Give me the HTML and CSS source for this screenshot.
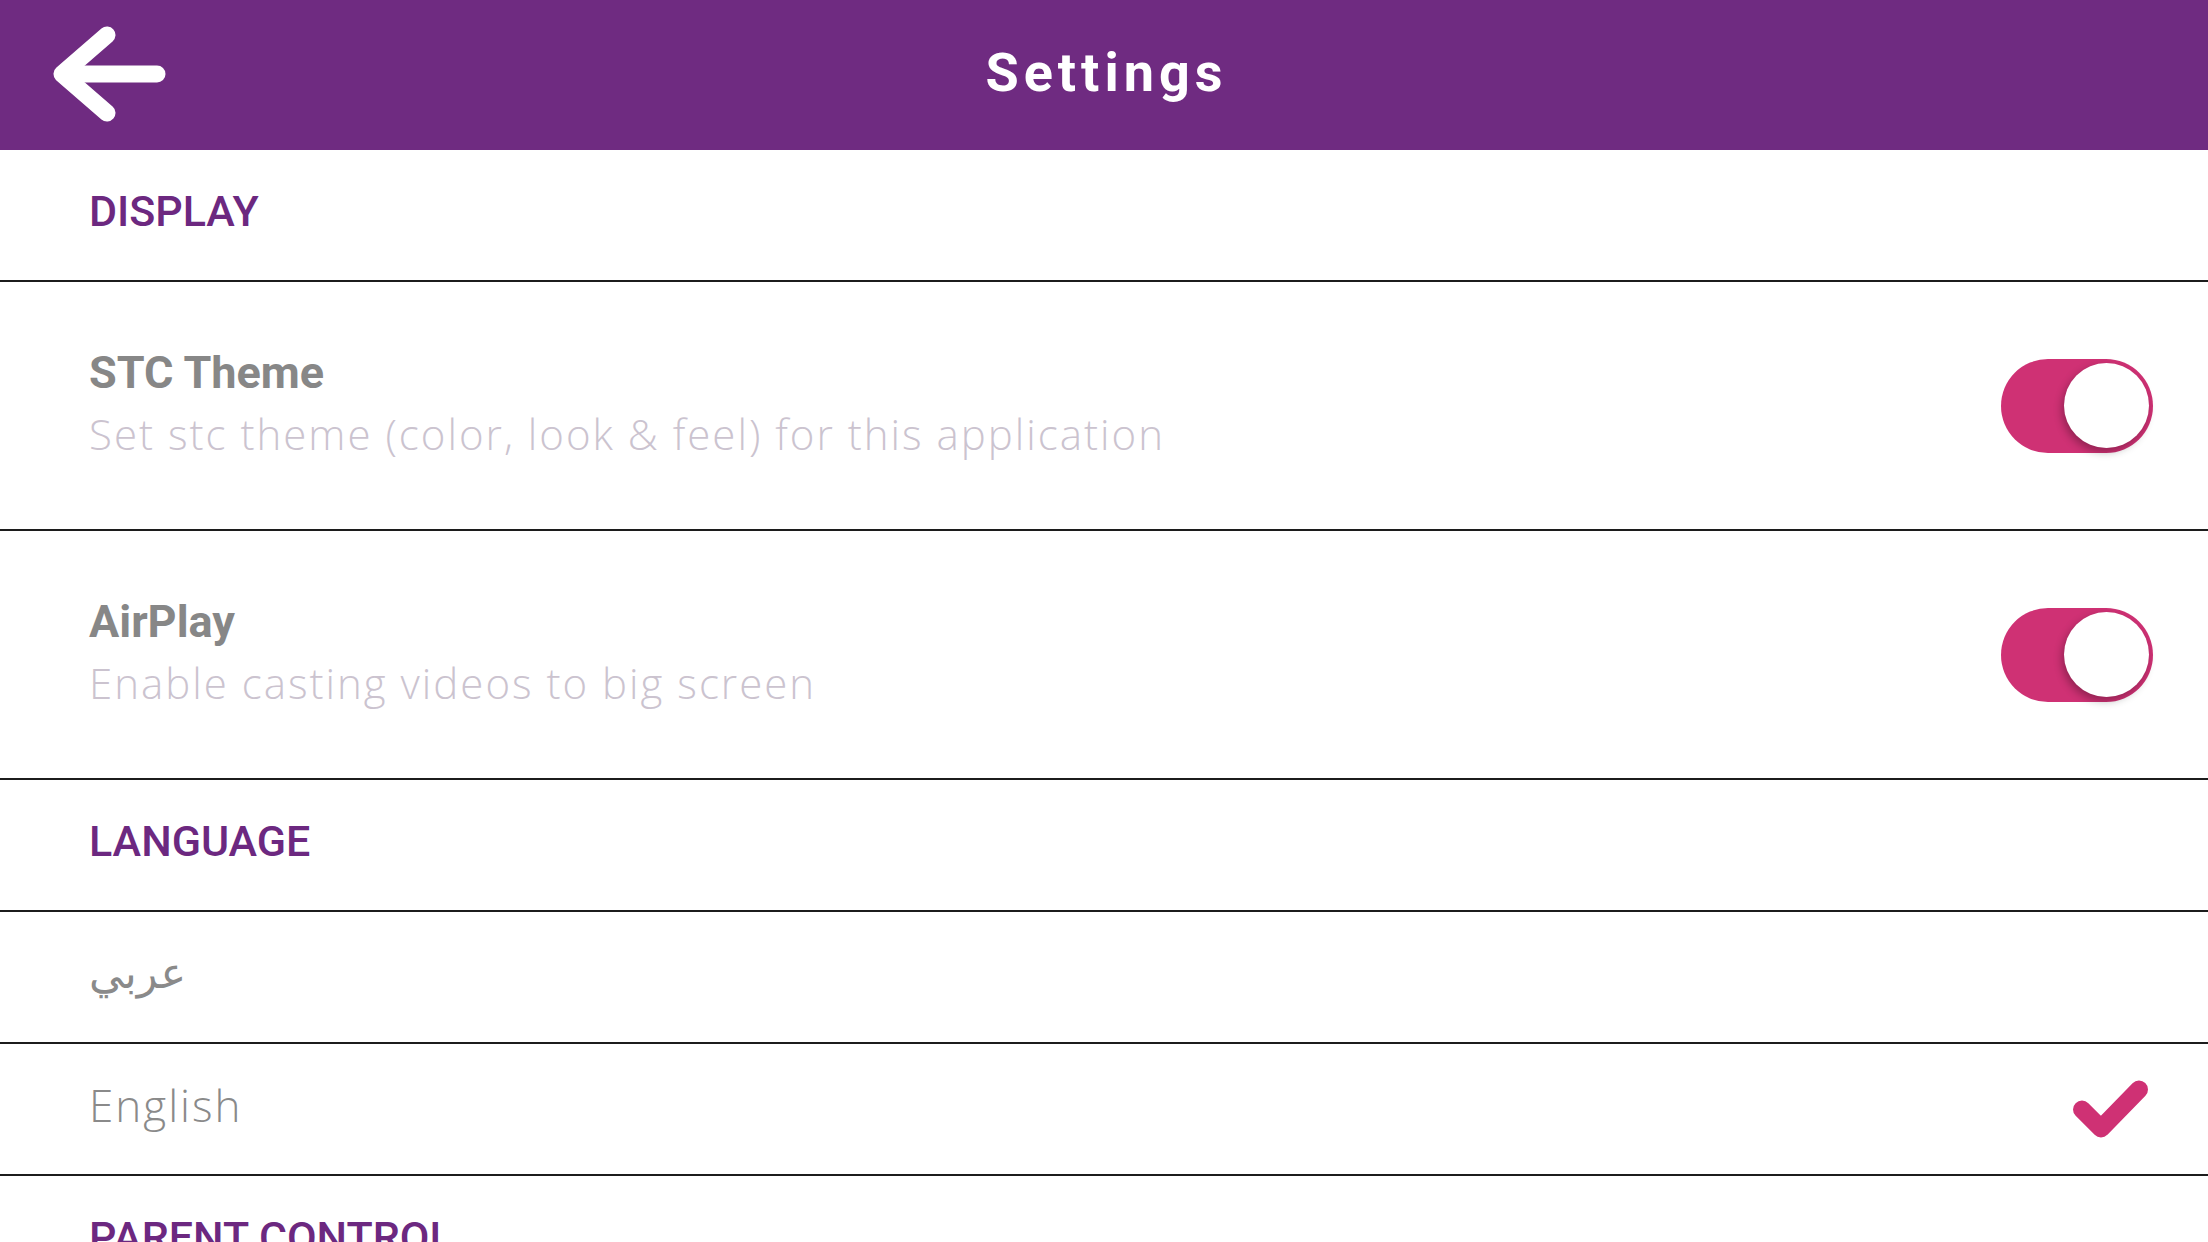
FILE: index.html
```html
<!DOCTYPE html>
<html lang="en">
<head>
    <meta charset="UTF-8">
    <meta name="viewport" content="width=device-width, initial-scale=1.0">
    <title>Settings</title>
    <link rel="stylesheet" href="styles.css">
</head>
<body>
    <header class="topbar">
        <div class="back">
            <svg width="120" height="100" viewBox="0 0 120 100">
                <polyline points="57,10 12,49 57,88" fill="none" stroke="#fff" stroke-width="17" stroke-linecap="round" stroke-linejoin="round"/>
                <line x1="14" y1="49" x2="107" y2="49" stroke="#fff" stroke-width="17" stroke-linecap="round"/>
            </svg>
        </div>
        <h1>Settings</h1>
        <div class="spacer"></div>
    </header>

    <div class="list">
        <div class="section">DISPLAY</div>

        <div class="item">
            <div class="texts">
                <div class="title">STC Theme</div>
                <div class="sub">Set stc theme (color, look &amp; feel) for this application</div>
            </div>
            <div class="toggle on"><span class="knob"></span></div>
        </div>

        <div class="item">
            <div class="texts">
                <div class="title">AirPlay</div>
                <div class="sub">Enable casting videos to big screen</div>
            </div>
            <div class="toggle on"><span class="knob"></span></div>
        </div>

        <div class="section">LANGUAGE</div>

        <div class="lang">
            <span lang="ar">عربي</span>
        </div>
        <div class="lang">
            <span>English</span>
            <svg class="check" width="80" height="60" viewBox="0 0 80 60">
                <polyline points="9,30.5 28,49.5 66,10.5" fill="none" stroke="#cf3174" stroke-width="18" stroke-linecap="round" stroke-linejoin="round"/>
            </svg>
        </div>

        <div class="section">PARENT CONTROL</div>
    </div>
</body>
</html>
```

FILE: styles.css
```css
html, body {
    margin: 0;
    padding: 0;
}
body {
    font-family: 'Roboto', 'Noto Sans', sans-serif;
    background-color: #ffffff;
    height: 1242px;
    overflow: hidden;
}
.topbar {
    height: 150px;
    background-color: #6f2b81;
    display: flex;
    align-items: center;
}
.back, .spacer {
    width: 200px;
    padding-left: 50px;
    box-sizing: border-box;
    display: flex;
    align-items: center;
}
.topbar h1 {
    flex: 1;
    margin: 0;
    text-align: center;
    color: #ffffff;
    font-size: 54px;
    font-weight: 700;
    letter-spacing: 5px;
    padding: 0 0 6px 5px;
}
.section {
    height: 122px;
    padding-bottom: 8px;
    border-bottom: 2px solid #1c1c1c;
    display: flex;
    align-items: center;
    padding-left: 89px;
    color: #6c2880;
    font-size: 43px;
    font-weight: 500;
}
.item {
    height: 247px;
    border-bottom: 2px solid #1c1c1c;
    display: flex;
    align-items: center;
    justify-content: space-between;
    padding: 0 55px 0 89px;
}
.texts {
    padding-bottom: 6px;
}
.title {
    color: #878787;
    font-size: 45px;
    font-weight: 700;
    line-height: 61px;
}
.sub {
    color: #cbc3cf;
    font-family: 'Open Sans', 'Roboto', sans-serif;
    font-size: 42px;
    font-weight: 300;
    letter-spacing: 2px;
    line-height: 61px;
}
.toggle {
    width: 152px;
    height: 94px;
    border-radius: 47px;
    background-color: #cf3174;
    position: relative;
}
.toggle .knob {
    position: absolute;
    right: 4px;
    top: 4px;
    width: 85px;
    height: 85px;
    border-radius: 50%;
    background: #ffffff;
    box-shadow: -2px 4px 8px rgba(0, 0, 0, 0.3);
}
.lang {
    height: 122px;
    padding: 0 55px 8px 89px;
    border-bottom: 2px solid #1c1c1c;
    display: flex;
    align-items: center;
    justify-content: space-between;
    color: #8a8a8a;
    font-family: 'Open Sans', 'Roboto', sans-serif;
    font-size: 44px;
    font-weight: 300;
    letter-spacing: 2px;
}
.lang .check {
    margin-top: 8px;
}
.lang span[lang="ar"] {
    font-family: 'DejaVu Sans', sans-serif;
    font-weight: 400;
    font-size: 43px;
    letter-spacing: 0;
}
```
